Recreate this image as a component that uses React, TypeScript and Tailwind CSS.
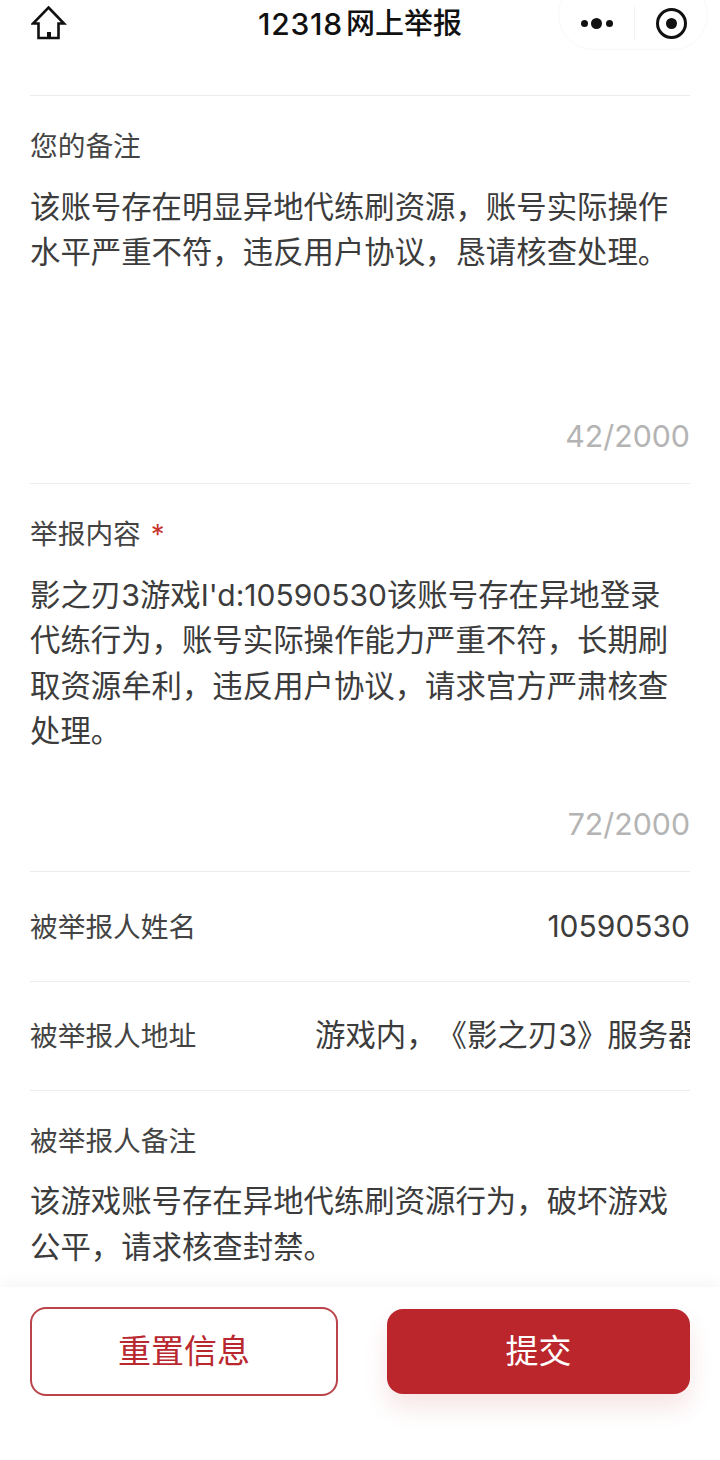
const font = {
  fontFamily: '"Inter", "Noto Sans CJK SC", sans-serif',
};

const Label = ({ text, required }: { text: string; required?: boolean }) => (
  <div className="flex items-center text-[27.7px] leading-[40px] text-[#444444]">
    {text}
    {required && <span className="ml-[10px] text-[#c9352f]">*</span>}
  </div>
);

const Row = ({
  label,
  h,
  children,
}: {
  label: string;
  h: string;
  children: React.ReactNode;
}) => (
  <div className={`flex items-center justify-between border-b border-[#ececec] ${h}`}>
    <Label text={label} />
    {children}
  </div>
);

const Area = ({
  label,
  children,
  count,
  required,
}: {
  label: string;
  children: React.ReactNode;
  count: string;
  required?: boolean;
}) => (
  <div className="flex h-[388px] flex-col border-b border-[#ececec] pt-[30px]">
    <Label text={label} required={required} />
    <div className="mt-[19px] flex-1 whitespace-nowrap text-[30.4px] leading-[45.4px] text-[#3c3c3c]">
      {children}
    </div>
    <div className="pb-[27px] text-right text-[30.3px] leading-[40px] text-[#b4b4b4]">{count}</div>
  </div>
);

export default function App() {
  return (
    <div className="flex h-[1460px] w-[720px] flex-col overflow-hidden bg-white" style={font}>
      <div className="relative flex h-[48px] shrink-0 items-center justify-center">
        <svg
          className="absolute left-[31px] top-[5px]"
          width="36"
          height="36"
          viewBox="0 0 36 36"
          fill="none"
          stroke="#111111"
          strokeWidth="2.6"
          strokeLinejoin="miter"
        >
          <path d="M17.5 2.5 L33 18.5 H27.5 V33 H7.5 V18.5 H2 Z" />
          <rect x="16" y="27" width="4" height="6" fill="#111111" stroke="none" />
        </svg>
        <div className="flex items-center text-[29px] font-medium leading-[48px] text-[#111111]">
          <span className="mr-[3px] text-[30px] tracking-[0.8px]">12318</span>网上举报
        </div>
        <div className="absolute left-[558px] top-[-20px] flex h-[70px] w-[150px] items-center rounded-[35px] border border-[#f8f8f8] pt-[16px]">
          <div className="flex w-[75px] items-center justify-center gap-[3.5px]">
            <span className="h-[7px] w-[7px] rounded-full bg-[#111111]" />
            <span className="h-[11px] w-[11px] rounded-full bg-[#111111]" />
            <span className="h-[7px] w-[7px] rounded-full bg-[#111111]" />
          </div>
          <div className="h-[35px] w-px bg-[#f3f3f3]" />
          <div className="flex flex-1 items-center justify-center">
            <div className="flex h-[31px] w-[31px] items-center justify-center rounded-full border-[3.5px] border-[#111111]">
              <span className="h-[11px] w-[11px] rounded-full bg-[#111111]" />
            </div>
          </div>
        </div>
      </div>

      <div className="mt-[47px] min-h-0 flex-1 overflow-hidden px-[30px]">
        <div className="border-t border-[#ececec]">
          <Area label="您的备注" count="42/2000">
            <div>该账号存在明显异地代练刷资源，账号实际操作</div>
            <div>水平严重不符，违反用户协议，恳请核查处理。</div>
          </Area>
          <Area label="举报内容" required count="72/2000">
            <div>
              影之刃3游戏<span className="text-[30px]">I'd:10590530</span>该账号存在异地登录
            </div>
            <div>代练行为，账号实际操作能力严重不符，长期刷</div>
            <div>取资源牟利，违反用户协议，请求宫方严肃核查</div>
            <div>处理。</div>
          </Area>
          <Row label="被举报人姓名" h="h-[110px]">
            <div className="text-[30px] text-[#3c3c3c]">10590530</div>
          </Row>
          <Row label="被举报人地址" h="h-[109px]">
            <div className="w-[375px] overflow-hidden whitespace-nowrap text-[30.4px] text-[#3c3c3c] [text-spacing-trim:space-all]">
              游戏内，《影之刃3》服务器
            </div>
          </Row>
          <div className="pt-[30px]">
            <Label text="被举报人备注" />
            <div className="mt-[17px] whitespace-nowrap text-[30.4px] leading-[46px] text-[#3c3c3c]">
              <div>该游戏账号存在异地代练刷资源行为，破坏游戏</div>
              <div>公平，请求核查封禁。</div>
            </div>
          </div>
        </div>
      </div>

      <div className="flex h-[173px] shrink-0 items-start justify-between bg-white px-[30px] pt-[20px] shadow-[0_-6px_14px_rgba(0,0,0,0.035)]">
        <button className="flex h-[89px] w-[308px] items-center justify-center rounded-[16px] border-2 border-[#b9444b] text-[33px] text-[#b9282f]">
          重置信息
        </button>
        <button className="mt-[2px] flex h-[85px] w-[303px] items-center justify-center rounded-[16px] bg-[#bb262c] text-[33px] text-white shadow-[0_14px_24px_rgba(187,38,44,0.12)]">
          提交
        </button>
      </div>
    </div>
  );
}
